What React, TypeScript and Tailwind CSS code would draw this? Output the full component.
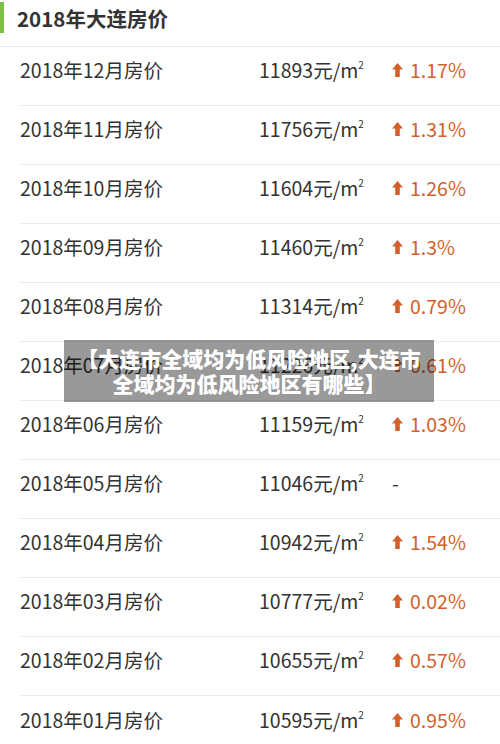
import React from 'react';

interface Row {
  month: string;
  price: number;
  change: string | null;
}

const rows: Row[] = [
  { month: '12', price: 11893, change: '1.17%' },
  { month: '11', price: 11756, change: '1.31%' },
  { month: '10', price: 11604, change: '1.26%' },
  { month: '09', price: 11460, change: '1.3%' },
  { month: '08', price: 11314, change: '0.79%' },
  { month: '07', price: 11226, change: '0.61%' },
  { month: '06', price: 11159, change: '1.03%' },
  { month: '05', price: 11046, change: null },
  { month: '04', price: 10942, change: '1.54%' },
  { month: '03', price: 10777, change: '0.02%' },
  { month: '02', price: 10655, change: '0.57%' },
  { month: '01', price: 10595, change: '0.95%' },
];

function UpArrow() {
  return (
    <svg width="11" height="14" viewBox="0 0 11 14" className="shrink-0">
      <path d="M5.5 0 L11 6.5 H7.8 V14 H3.2 V6.5 H0 Z" fill="#d45f2b" />
    </svg>
  );
}

export default function App() {
  return (
    <div
      className="relative w-[500px] h-[744px] overflow-hidden bg-white text-[#333]"
      style={{ fontFamily: '"Noto Sans CJK SC", "Noto Sans", sans-serif' }}
    >
      {/* header */}
      <div className="h-[47px] flex items-start border-b border-[#ececec]">
        <div className="w-[4px] h-[31px] mt-[2px] bg-[#7cc242]" />
        <h1 className="ml-[13px] mt-[4px] text-[20.5px] leading-[28px] font-bold text-[#333]">2018年大连房价</h1>
      </div>

      {/* rows */}
      <div className="pl-[20px]">
        {rows.map((r, i) => (
          <div
            key={r.month}
            className={`flex items-center h-[59px] pb-[12px] text-[19.5px] ${i < rows.length - 1 ? 'border-b border-[#ececec]' : ''}`}
          >
            <div className="w-[239px]">2018年{r.month}月房价</div>
            <div className="w-[133px]">
              {r.price}元/m<sup className="text-[10px] top-[-0.9em]">2</sup>
            </div>
            {r.change ? (
              <div className="flex items-center gap-[7px] text-[#d45f2b]">
                <UpArrow />
                <span>{r.change}</span>
              </div>
            ) : (
              <div className="text-[#333]">-</div>
            )}
          </div>
        ))}
      </div>

      {/* overlay caption */}
      <div className="absolute left-[64px] top-[340px] w-[370px] h-[62px] bg-black/40 flex items-center justify-center">
        <p className="text-white font-black text-[21px] leading-[25px] text-center whitespace-nowrap">
          【大连市全域均为低风险地区,大连市
          <br />
          全域均为低风险地区有哪些】
        </p>
      </div>
    </div>
  );
}
